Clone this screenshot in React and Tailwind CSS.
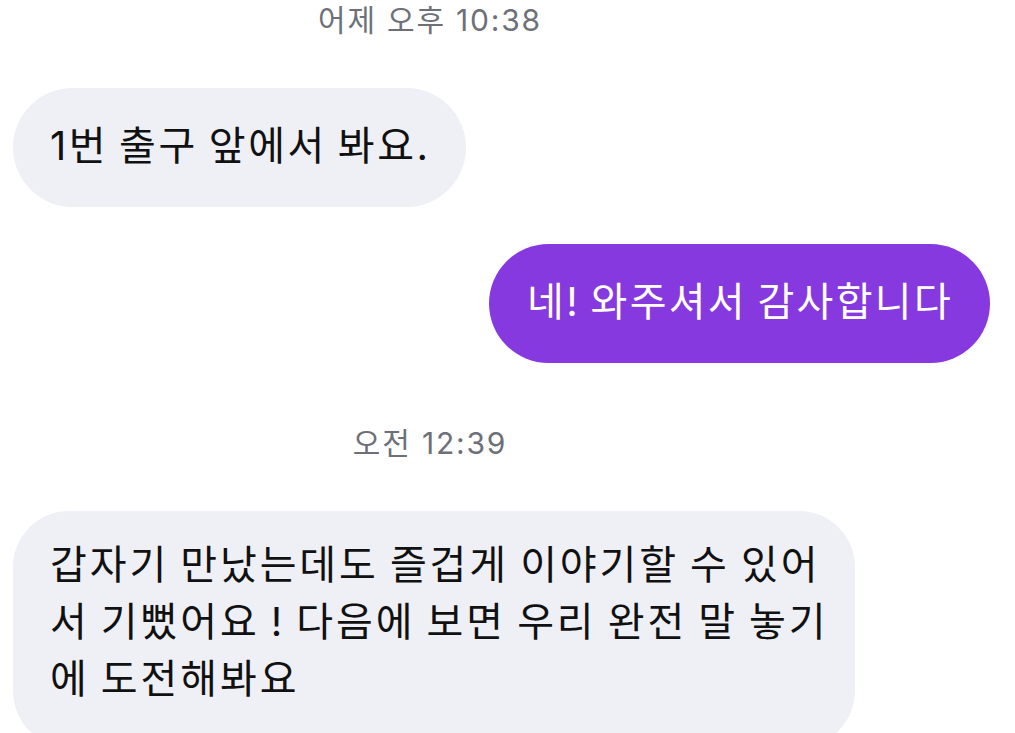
import React from 'react';

const Stamp = ({ children, className }) => (
    <div className={`w-[834px] text-center text-[30px] leading-[40px] tracking-[1.8px] text-[#6d7078] ${className}`}>{children}</div>
);

const App = () => {
    return (
        <div className="w-[1015px] h-[733px] overflow-hidden bg-white px-[13px] font-['Inter','Noto_Sans_CJK_KR',sans-serif]">
            <Stamp className="">어제 오후 10:38</Stamp>

            <div className="mt-[48px] flex">
                <div className="bg-[#eff0f5] rounded-[60px] pl-[37px] pr-[35px] pt-[29px] pb-[33px] text-[40px] leading-[57px] tracking-[2.6px] [word-spacing:-3px] text-[#111111] whitespace-nowrap">
                    1번 출구 앞에서 봐요.
                </div>
            </div>

            <div className="mt-[37px] flex justify-end pr-[12px]">
                <div className="bg-[#8739e0] rounded-[60px] pl-[38px] pr-[37px] pt-[29px] pb-[33px] text-[40px] leading-[57px] tracking-[2.3px] [word-spacing:-3px] text-white whitespace-nowrap">
                    네! 와주셔서 감사합니다
                </div>
            </div>

            <Stamp className="mt-[60px]">오전 12:39</Stamp>

            <div className="mt-[48px] flex">
                <div className="w-[842px] bg-[#eff0f5] rounded-[56px] pl-[37px] pr-[20px] pt-[25px] pb-[40px] text-[40px] leading-[57px] tracking-[2.9px] [word-spacing:-3px] text-[#111111] whitespace-nowrap">
                    <div>갑자기 만났는데도 즐겁게 이야기할 수 있어</div>
                    <div>서 기뻤어요 ! 다음에 보면 우리 완전 말 놓기</div>
                    <div>에 도전해봐요</div>
                </div>
            </div>
        </div>
    );
};

export default App;
